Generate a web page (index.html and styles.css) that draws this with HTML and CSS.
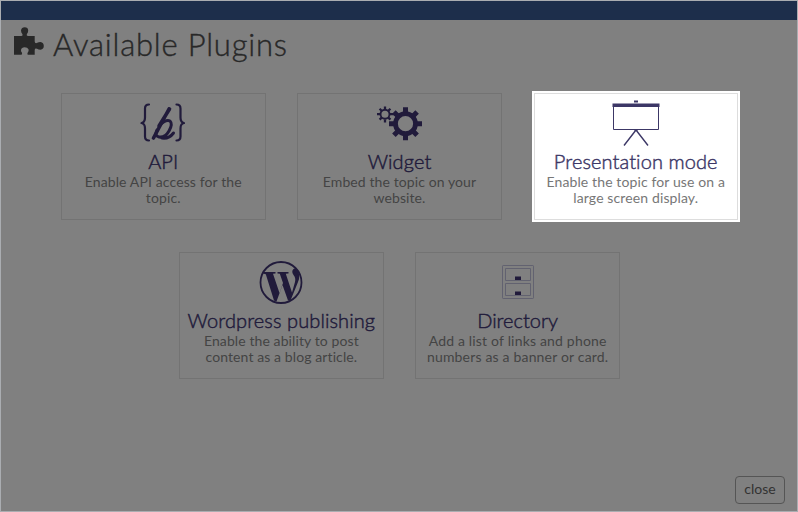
FILE: index.html
```html
<!DOCTYPE html>
<html lang="en">
<head>
<meta charset="utf-8">
<title>Available Plugins</title>
<link rel="stylesheet" href="styles.css">
</head>
<body>
<div class="window">
  <div class="topbar"></div>
  <header class="heading">
    <svg class="puzzle" width="32" height="30" viewBox="0 0 32 30"><path d="M1 10H8.500Q10 10 9.500 8.300Q8 6.500 8 4.500Q8.500 1.300 11.700 1.300Q15 1.300 15.200 4.500Q15.200 6.500 13.800 8.200Q13.200 10 15 10H21.700V15.500Q22 18 24.300 16.800Q25.500 16 27.500 16Q30.800 16.500 30.800 20Q30.800 23.300 27.500 23.800Q25.500 23.800 24 22.800Q22 22 21.700 24V28.800H15Q14 28.500 14.500 27Q16.200 25 15.500 23.300Q14.500 21.300 11.700 21.300Q8.500 21.500 8 24Q7.800 25.500 9 26.700Q9.500 28.500 8.200 28.800H1Z"/></svg>
    <h1>Available Plugins</h1>
  </header>
  <main>
    <div class="row">
      <section class="card">
        <svg class="icon" width="48" height="46" viewBox="0 0 48 46">
          <g fill="none" stroke="currentColor" stroke-linecap="round" stroke-linejoin="round">
            <path stroke-width="2.200" d="M10 4.500Q6 4.500 6 8.500V17.500Q6 22.500 2.500 23Q6 23.500 6 28.500V36.500Q6 40.500 10 40.500M37.500 4.500Q41.500 4.500 41.500 8.500V17.500Q41.500 22.500 45 23Q41.500 23.500 41.500 28.500V36.500Q41.500 40.500 37.500 40.500"/>
            <path stroke-width="3.600" d="M30 9L14.500 38M30.500 9L20 26"/>
            <path stroke-width="3" d="M21 25Q27 19 31 21Q34 24 30 31Q26 38 20 37Q15 36 18 30M23 38Q30 39 34.500 33"/>
          </g>
        </svg>
        <h2>API</h2>
        <p class="api">Enable API access for the<br>topic.</p>
      </section>
      <section class="card">
        <svg class="icon" width="48" height="46" viewBox="0 0 48 46">
          <g fill="none" stroke="currentColor">
            <circle cx="29.500" cy="23.700" r="10" stroke-width="4.800"/>
            <path stroke-width="5" d="M29.500 7.200v5M29.500 35.200v5M13 23.700h5M41 23.700h5M17.900 12.100l3.500 3.500M37.600 31.800l3.500 3.500M17.900 35.300l3.500-3.500M37.600 15.600l3.500-3.500"/>
            <circle cx="9" cy="14.200" r="4.500" stroke-width="1.900"/>
            <path stroke-width="2.300" d="M9 6.400v3M9 19.400v3M1 14.200h3M14 14.200h5M3.600 8.800l2 2M12.400 17.600l2 2M3.600 19.600l2-2M12.400 10.800l2-2"/>
          </g>
        </svg>
        <h2>Widget</h2>
        <p class="embed">Embed the topic on your<br>website.</p>
      </section>
      <section class="card active">
        <svg class="icon" width="48" height="46" viewBox="0 0 48 46">
          <path fill="currentColor" d="M.5 3.500h47V7H.5zM22 .5h4v2h-4z"/>
          <g fill="none" stroke="currentColor"><path d="M1.500 7v22.500h45V7"/><path stroke-width="1.400" d="M24 30L12 45.500M24 30L36 45.500"/><path stroke-width="2" d="M22.500 30h3"/></g>
        </svg>
        <h2>Presentation mode</h2>
        <p class="screen">Enable the topic for use on a<br>large screen display.</p>
      </section>
    </div>
    <div class="row">
      <section class="card">
        <svg class="icon" width="48" height="46" viewBox="0 0 48 46">
          <circle cx="24" cy="23.500" r="20.500" fill="none" stroke="currentColor" stroke-width="1.800"/>
          <path fill="currentColor" d="M7 13H18.500V14.500L16 14.700L22.500 34L26 24L22.800 14.700L20.500 14.500V13H31.500V14.500L28.800 14.700L35 33.500L38 23Q39 19 36.500 16Q34 12.500 36.500 10Q38.500 8.500 40 10Q44 16 41 23L33.500 41.500L31 41.500L25.500 26L19.500 42.500L17 41.500L8.800 15.200L6 14.500Z"/>
        </svg>
        <h2>Wordpress publishing</h2>
        <p class="blog">Enable the ability to post<br>content as a blog article.</p>
      </section>
      <section class="card">
        <svg class="icon" width="48" height="46" viewBox="0 0 48 46">
          <g class="cabinet" fill="none"><rect x="8.500" y="6.500" width="31" height="33" rx=".7"/><path d="M11.500 9.500h25v12h-25zM11.500 24.500h25v12h-25z"/></g>
          <path fill="currentColor" d="M21 17.500h6v3.500h-6zM21 32.500h6v3.500h-6z"/>
        </svg>
        <h2 class="directory">Directory</h2>
        <p class="links">Add a list of links and phone<br>numbers as a banner or card.</p>
      </section>
    </div>
  </main>
  <button>close</button>
</div>
</body>
</html>
```
FILE: styles.css
```css
* { box-sizing: border-box; }
body { margin: 0; font-family: Lato, "Liberation Sans", sans-serif; background: #808080; }
.window { height: 512px; border: 1px solid #aaadb1; display: flex; flex-direction: column; overflow: hidden; }
.topbar { height: 19px; background: #1d2e4b; flex-shrink: 0; }
.heading { height: 72px; padding: 6px 0 0 12px; display: flex; align-items: flex-start; flex-shrink: 0; color: #282828; }
.puzzle { fill: currentColor; }
h1 { margin: 0 0 0 8px; font-size: 31px; line-height: 36px; font-weight: 300; letter-spacing: .8px; white-space: nowrap; -webkit-text-stroke: .4px currentColor; }
main { display: flex; flex-direction: column; gap: 32px; padding-top: 1px; }
.row { display: flex; justify-content: center; gap: 31.750px; padding-left: 1px; }
.card { width: 204.500px; height: 127px; border: 1px solid #737373; padding-top: 6px; text-align: center; color: #211b3b; display: flex; flex-direction: column; align-items: center; }
.icon { display: block; overflow: visible; }
h2 { margin: 2px 0 0; font-size: 20px; line-height: 26px; font-weight: 300; letter-spacing: .1px; white-space: nowrap; -webkit-text-stroke: .45px currentColor; }
.directory { letter-spacing: 0; }
p { margin: 0; font-size: 14px; line-height: 16px; letter-spacing: .12px; color: #444; white-space: nowrap; }
.links { letter-spacing: .18px; }
.embed, .blog { letter-spacing: .1px; }
.active { background: #fff; color: #3c3766; border-color: #ddd; box-shadow: 0 0 0 2px #fff; }
.active p { color: #777; }
.cabinet { stroke: #626270; }
button { align-self: flex-end; margin: auto 12px 7px 0; width: 50px; height: 28px; padding: 0 0 2px; border: 1px solid #555; border-radius: 4px; background: none; color: #333; font: 14px/18px Lato, sans-serif; }
```
